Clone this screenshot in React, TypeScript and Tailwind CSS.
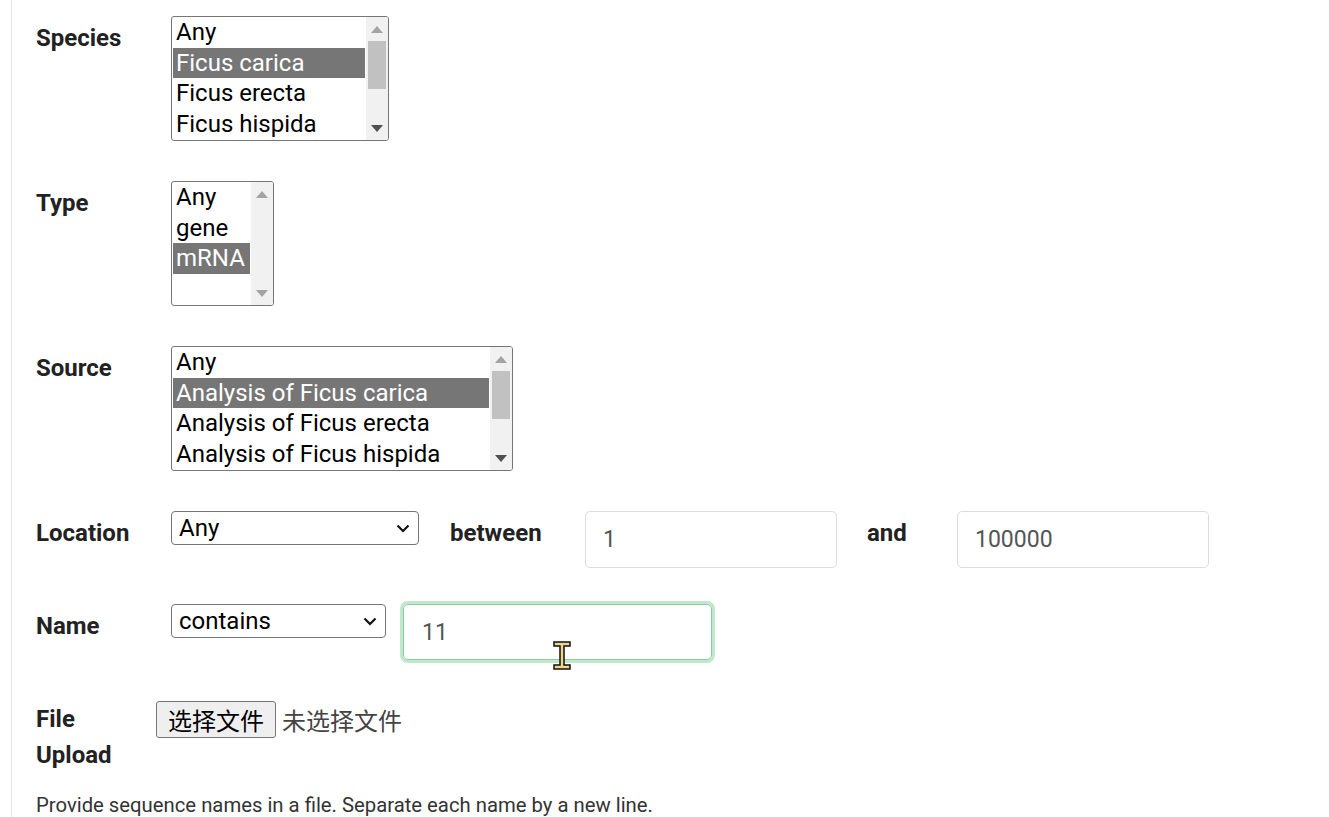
import React from 'react';

const font = "font-['Roboto','Liberation_Sans',sans-serif]";

interface ListBoxProps {
  options: string[];
  selected: number;
  width: string;
  thumb?: boolean;
}

function ListBox({ options, selected, width, thumb }: ListBoxProps) {
  return (
    <div className={`${width} h-[125px] border border-[#767676] rounded-[3px] bg-white flex overflow-hidden`}>
      <div className="flex-1 min-w-0 pl-[1px] pr-[1px]">
        {options.map((o, i) => (
          <div
            key={o}
            className={`h-[30.5px] leading-[30.5px] pl-[3px] text-[24px] whitespace-nowrap ${
              i === selected ? 'bg-[#767676] text-white' : 'text-black'
            }`}
          >
            {o}
          </div>
        ))}
      </div>
      {/* fake scrollbar */}
      <div className="w-[22px] bg-[#f1f1f1] flex flex-col items-center">
        <div className="h-[24px] flex items-center justify-center">
          <svg width="12" height="7" viewBox="0 0 12 7">
            <path d="M0 7 L6 0 L12 7 Z" fill="#a3a3a3" />
          </svg>
        </div>
        <div className="flex-1 w-full px-[2px]">
          {thumb && <div className="h-[48px] bg-[#c1c1c1]" />}
        </div>
        <div className="h-[24px] flex items-center justify-center">
          <svg width="12" height="7" viewBox="0 0 12 7">
            <path d="M0 0 L12 0 L6 7 Z" fill={thumb ? '#505050' : '#a3a3a3'} />
          </svg>
        </div>
      </div>
    </div>
  );
}

function Label({
  children,
  className = 'w-[135px] pt-[4px]',
}: {
  children: React.ReactNode;
  className?: string;
}) {
  return (
    <div className={`${className} shrink-0 text-[24px] leading-[36px] font-bold text-[#222]`}>
      {children}
    </div>
  );
}

function Chevron() {
  return (
    <svg
      className="absolute right-[9px] top-[13px] pointer-events-none"
      width="14"
      height="9"
      viewBox="0 0 14 9"
    >
      <path d="M1.5 1.5 L7 7 L12.5 1.5" stroke="#111" strokeWidth="2.2" fill="none" />
    </svg>
  );
}

function Select({ value, width }: { value: string; width: string }) {
  return (
    <div className={`relative ${width} h-[34px]`}>
      <select
        defaultValue={value}
        className={`${font} appearance-none w-full h-full border border-[#767676] rounded-[4px] bg-white pl-[7px] text-[24px] leading-[32px] text-black outline-none`}
      >
        <option>{value}</option>
      </select>
      <Chevron />
    </div>
  );
}

const inputCls = `${font} w-[252px] h-[57px] border border-[#dcdcdc] rounded-[5px] pl-[17px] text-[23px] text-[#555] outline-none`;

export default function App() {
  return (
    <div className={`${font} min-h-screen bg-white`}>
      <div className="ml-[11px] border-l border-[#e4e4e4] pl-[24px] pt-[16px] pb-[10px] min-h-[817px]">
        {/* Species */}
        <div className="flex">
          <Label>Species</Label>
          <ListBox
            width="w-[218px]"
            options={['Any', 'Ficus carica', 'Ficus erecta', 'Ficus hispida']}
            selected={1}
            thumb
          />
        </div>

        {/* Type */}
        <div className="flex mt-[40px]">
          <Label>Type</Label>
          <ListBox width="w-[103px]" options={['Any', 'gene', 'mRNA']} selected={2} />
        </div>

        {/* Source */}
        <div className="flex mt-[40px]">
          <Label>Source</Label>
          <ListBox
            width="w-[342px]"
            options={['Any', 'Analysis of Ficus carica', 'Analysis of Ficus erecta', 'Analysis of Ficus hispida']}
            selected={1}
            thumb
          />
        </div>

        {/* Location */}
        <div className="flex mt-[40px] items-start">
          <Label>Location</Label>
          <Select value="Any" width="w-[248px]" />
          <Label className="ml-[31px] w-[135px] pt-[4px]">between</Label>
          <input readOnly value="1" className={inputCls} />
          <Label className="ml-[30px] w-[90px] pt-[4px]">and</Label>
          <input readOnly value="100000" className={inputCls} />
        </div>

        {/* Name */}
        <div className="flex mt-[36px] items-start">
          <Label>Name</Label>
          <Select value="contains" width="w-[215px]" />
          <div className="relative ml-[17px]">
            <input
              readOnly
              value="11"
              className={`${font} w-[309px] h-[56px] border border-[#86cf9c] rounded-[5px] pl-[18px] text-[23px] text-[#555] outline-none shadow-[0_0_0_3px_#c2e7cd]`}
            />
            {/* text cursor */}
            <svg
              className="absolute left-[150px] top-[37px] pointer-events-none"
              width="18"
              height="29"
              viewBox="0 0 18 29"
            >
              <path
                d="M1 1 H17 V5 H11 V24 H17 V28 H1 V24 H7 V5 H1 Z"
                fill="#f0d58c"
                stroke="#111"
                strokeWidth="1.5"
                strokeLinejoin="miter"
              />
            </svg>
          </div>
        </div>

        {/* File upload */}
        <div className="flex mt-[41px] items-start">
          <Label className="w-[120px]">
            File
            <br />
            Upload
          </Label>
          <div className="flex items-center h-[37px] font-['Noto_Sans_CJK_SC',sans-serif]">
            <button className="h-[37px] px-[11px] bg-[#efefef] border border-[#767676] rounded-[3px] text-[24px] leading-[35px] text-black">
              选择文件
            </button>
            <span className="ml-[6px] text-[24px] text-[#444]">未选择文件</span>
          </div>
        </div>

        <p className="mt-[18px] text-[20.3px] leading-[28px] text-[#333]">
          Provide sequence names in a file. Separate each name by a new line.
        </p>
      </div>
    </div>
  );
}
